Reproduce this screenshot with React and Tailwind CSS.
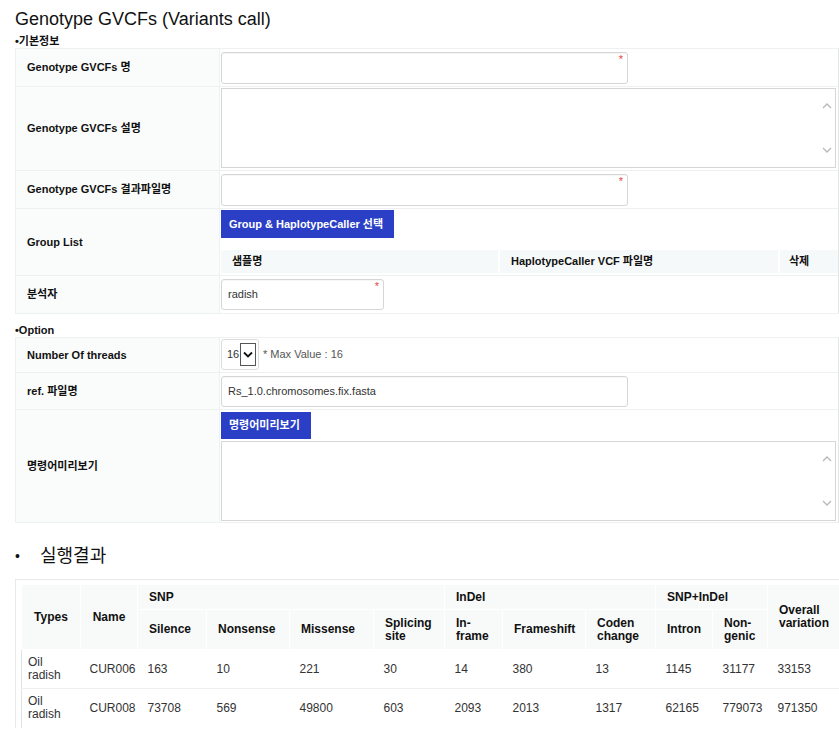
import React from "react";

const FONT = "font-['Liberation_Sans','Noto_Sans_CJK_KR',sans-serif]";

function Req() {
  return (
    <span className="absolute right-[4px] top-[1px] text-[11px] leading-[11px] text-[#e5483f]">*</span>
  );
}

function Input({ w = "w-[407px]", h = "h-[32px]", value, req }) {
  return (
    <div
      className={`relative ${w} ${h} rounded-[3px] border border-[#d6d6d6] bg-white shadow-[inset_0_1px_1px_rgba(0,0,0,0.04)] flex items-center pl-[6px] text-[11px] text-[#333]`}
    >
      {value}
      {req && <Req />}
    </div>
  );
}

function TextArea() {
  return (
    <div className="relative h-[80px] w-[615px] border border-[#d6d6d6] bg-white">
      <svg className="absolute right-[3px] top-[13px]" width="10" height="7" viewBox="0 0 10 7">
        <path d="M1 6 L5 2 L9 6" fill="none" stroke="#b8b8b8" strokeWidth="1.3" />
      </svg>
      <svg className="absolute right-[3px] bottom-[13px]" width="10" height="7" viewBox="0 0 10 7">
        <path d="M1 1 L5 5 L9 1" fill="none" stroke="#b8b8b8" strokeWidth="1.3" />
      </svg>
    </div>
  );
}

function Row({ label, children, last, pad = "pt-[3px] pb-[2px]" }) {
  return (
    <div className={`flex ${last ? "" : "border-b border-[#eef1f1]"}`}>
      <div className="w-[204px] shrink-0 bg-[#fafcfc] border-r border-[#eef1f1] flex items-center pl-[11px] text-[11px] font-bold text-[#111]">
        {label}
      </div>
      <div className={`flex-1 pl-[1px] ${pad}`}>{children}</div>
    </div>
  );
}

const cols = [59, 57, 69, 83, 84, 71, 58, 83, 70, 57, 55, 72];

const data = [
  ["Oil radish", "CUR006", "163", "10", "221", "30", "14", "380", "13", "1145", "31177", "33153"],
  ["Oil radish", "CUR008", "73708", "569", "49800", "603", "2093", "2013", "1317", "62165", "779073", "971350"],
];

export default function App() {
  const base = "bg-[#f8fafa] border border-white align-middle font-bold text-[12px] leading-[13px] text-[#111]";
  const th = `${base} text-left pl-[11px]`;
  const thc = `${base} text-center`;
  return (
    <div className={`${FONT} w-[839px] min-h-[733px] bg-white text-[#222] overflow-hidden`}>
      <h1 className="pl-[15px] pt-[7px] text-[18px] leading-[24px] font-normal text-[#111]">
        Genotype GVCFs (Variants call)
      </h1>
      <div className="pl-[15px] mt-[3px] text-[11px] leading-[14px] font-bold text-[#111]">•기본정보</div>

      <div className="ml-[15px] w-[824px] border border-[#eef1f1] border-r-[#e4e6e6]">
        <Row label="Genotype GVCFs 명">
          <Input req />
        </Row>
        <Row label="Genotype GVCFs 설명" pad="pt-[1px] pb-[2px]">
          <TextArea />
        </Row>
        <Row label="Genotype GVCFs 결과파일명">
          <Input req />
        </Row>
        <Row label="Group List" pad="pt-[1px] pb-[2px]">
          <div className="w-[173px] h-[28px] bg-[#2a3fc6] text-white font-bold text-[11px] flex items-center px-[8px]">
            Group &amp; HaplotypeCaller 선택
          </div>
          <div className="mt-[12px] flex h-[23px] text-[11px] font-bold text-[#111]">
            <div className="w-[279px] bg-[#f6f9f9] border-r-2 border-white flex items-center pl-[11px]">샘플명</div>
            <div className="w-[280px] bg-[#f6f9f9] border-r-2 border-white flex items-center pl-[11px]">HaplotypeCaller VCF 파일명</div>
            <div className="flex-1 bg-[#f6f9f9] flex items-center pl-[9px]">삭제</div>
          </div>
        </Row>
        <Row label="분석자" last pad="pt-[3px] pb-[3px]">
          <Input w="w-[163px]" h="h-[31px]" value="radish" req />
        </Row>
      </div>

      <div className="pl-[15px] mt-[9px] text-[11px] leading-[14px] font-bold text-[#111]">•Option</div>

      <div className="ml-[15px] w-[824px] border border-[#eef1f1] border-r-[#e4e6e6]">
        <Row label="Number Of threads" pad="pt-[1px] pb-[2px]">
          <div className="flex items-center h-[31px]">
            <div className="w-[38px] h-[31px] rounded-[3px] border border-[#dcdcdc] flex items-center pl-[5px] text-[11px] text-[#333]">
              16
              <div className="ml-[1px] w-[16px] h-[23px] border border-[#555] bg-white flex items-center justify-center">
                <svg width="10" height="7" viewBox="0 0 10 7">
                  <path d="M1 1.5 L5 5.5 L9 1.5" fill="none" stroke="#111" strokeWidth="1.8" />
                </svg>
              </div>
            </div>
            <span className="ml-[4px] text-[11px] text-[#555]">* Max Value : 16</span>
          </div>
        </Row>
        <Row label="ref. 파일명" pad="pt-[3px] pb-[2px]">
          <Input h="h-[31px]" value="Rs_1.0.chromosomes.fix.fasta" />
        </Row>
        <Row label="명령어미리보기" last pad="pt-[2px] pb-[1px]">
          <div className="w-[90px] h-[27px] bg-[#2a3fc6] text-white font-bold text-[11px] flex items-center px-[8px]">
            명령어미리보기
          </div>
          <div className="mt-[2px]">
            <TextArea />
          </div>
        </Row>
      </div>

      <div className="mt-[20px] h-[26px] flex items-center text-[18px] text-[#111]">
        <span className="pl-[15px] w-[40px] text-[14px]">•</span>
        <span>실행결과</span>
      </div>

      <div className="mt-[10px] ml-[15px] border-l border-t border-[#e8eaea] pt-[4px] pl-[5px]">
        <table className="table-fixed border-collapse border-l border-[#e2e4e4]" style={{ width: 818 }}>
          <colgroup>
            {cols.map((c, i) => (
              <col key={i} style={{ width: c }} />
            ))}
          </colgroup>
          <thead>
            <tr className="h-[25px]">
              <th rowSpan={2} className={thc}>Types</th>
              <th rowSpan={2} className={thc}>Name</th>
              <th colSpan={4} className={th}>SNP</th>
              <th colSpan={3} className={th}>InDel</th>
              <th colSpan={2} className={th}>SNP+InDel</th>
              <th rowSpan={2} className={th}>
                Overall
                <br />
                variation
              </th>
            </tr>
            <tr className="h-[40px]">
              <th className={th}>Silence</th>
              <th className={th}>Nonsense</th>
              <th className={th}>Missense</th>
              <th className={th}>
                Splicing
                <br />
                site
              </th>
              <th className={th}>
                In-
                <br />
                frame
              </th>
              <th className={th}>Frameshift</th>
              <th className={th}>
                Coden
                <br />
                change
              </th>
              <th className={th}>Intron</th>
              <th className={th}>
                Non-
                <br />
                genic
              </th>
            </tr>
          </thead>
          <tbody>
            {data.map((r, ri) => (
              <tr key={ri} className="h-[39px] border-t border-[#eef0f0]">
                {r.map((v, ci) => (
                  <td
                    key={ci}
                    className={`text-[12px] leading-[13px] text-[#333] align-middle ${
                      ci === 0 ? "pl-[6px]" : ci === 1 ? "pl-[9px]" : "pl-[10px]"
                    }`}
                  >
                    {ci === 0 ? (
                      <>
                        Oil
                        <br />
                        radish
                      </>
                    ) : (
                      v
                    )}
                  </td>
                ))}
              </tr>
            ))}
          </tbody>
        </table>
      </div>
    </div>
  );
}
